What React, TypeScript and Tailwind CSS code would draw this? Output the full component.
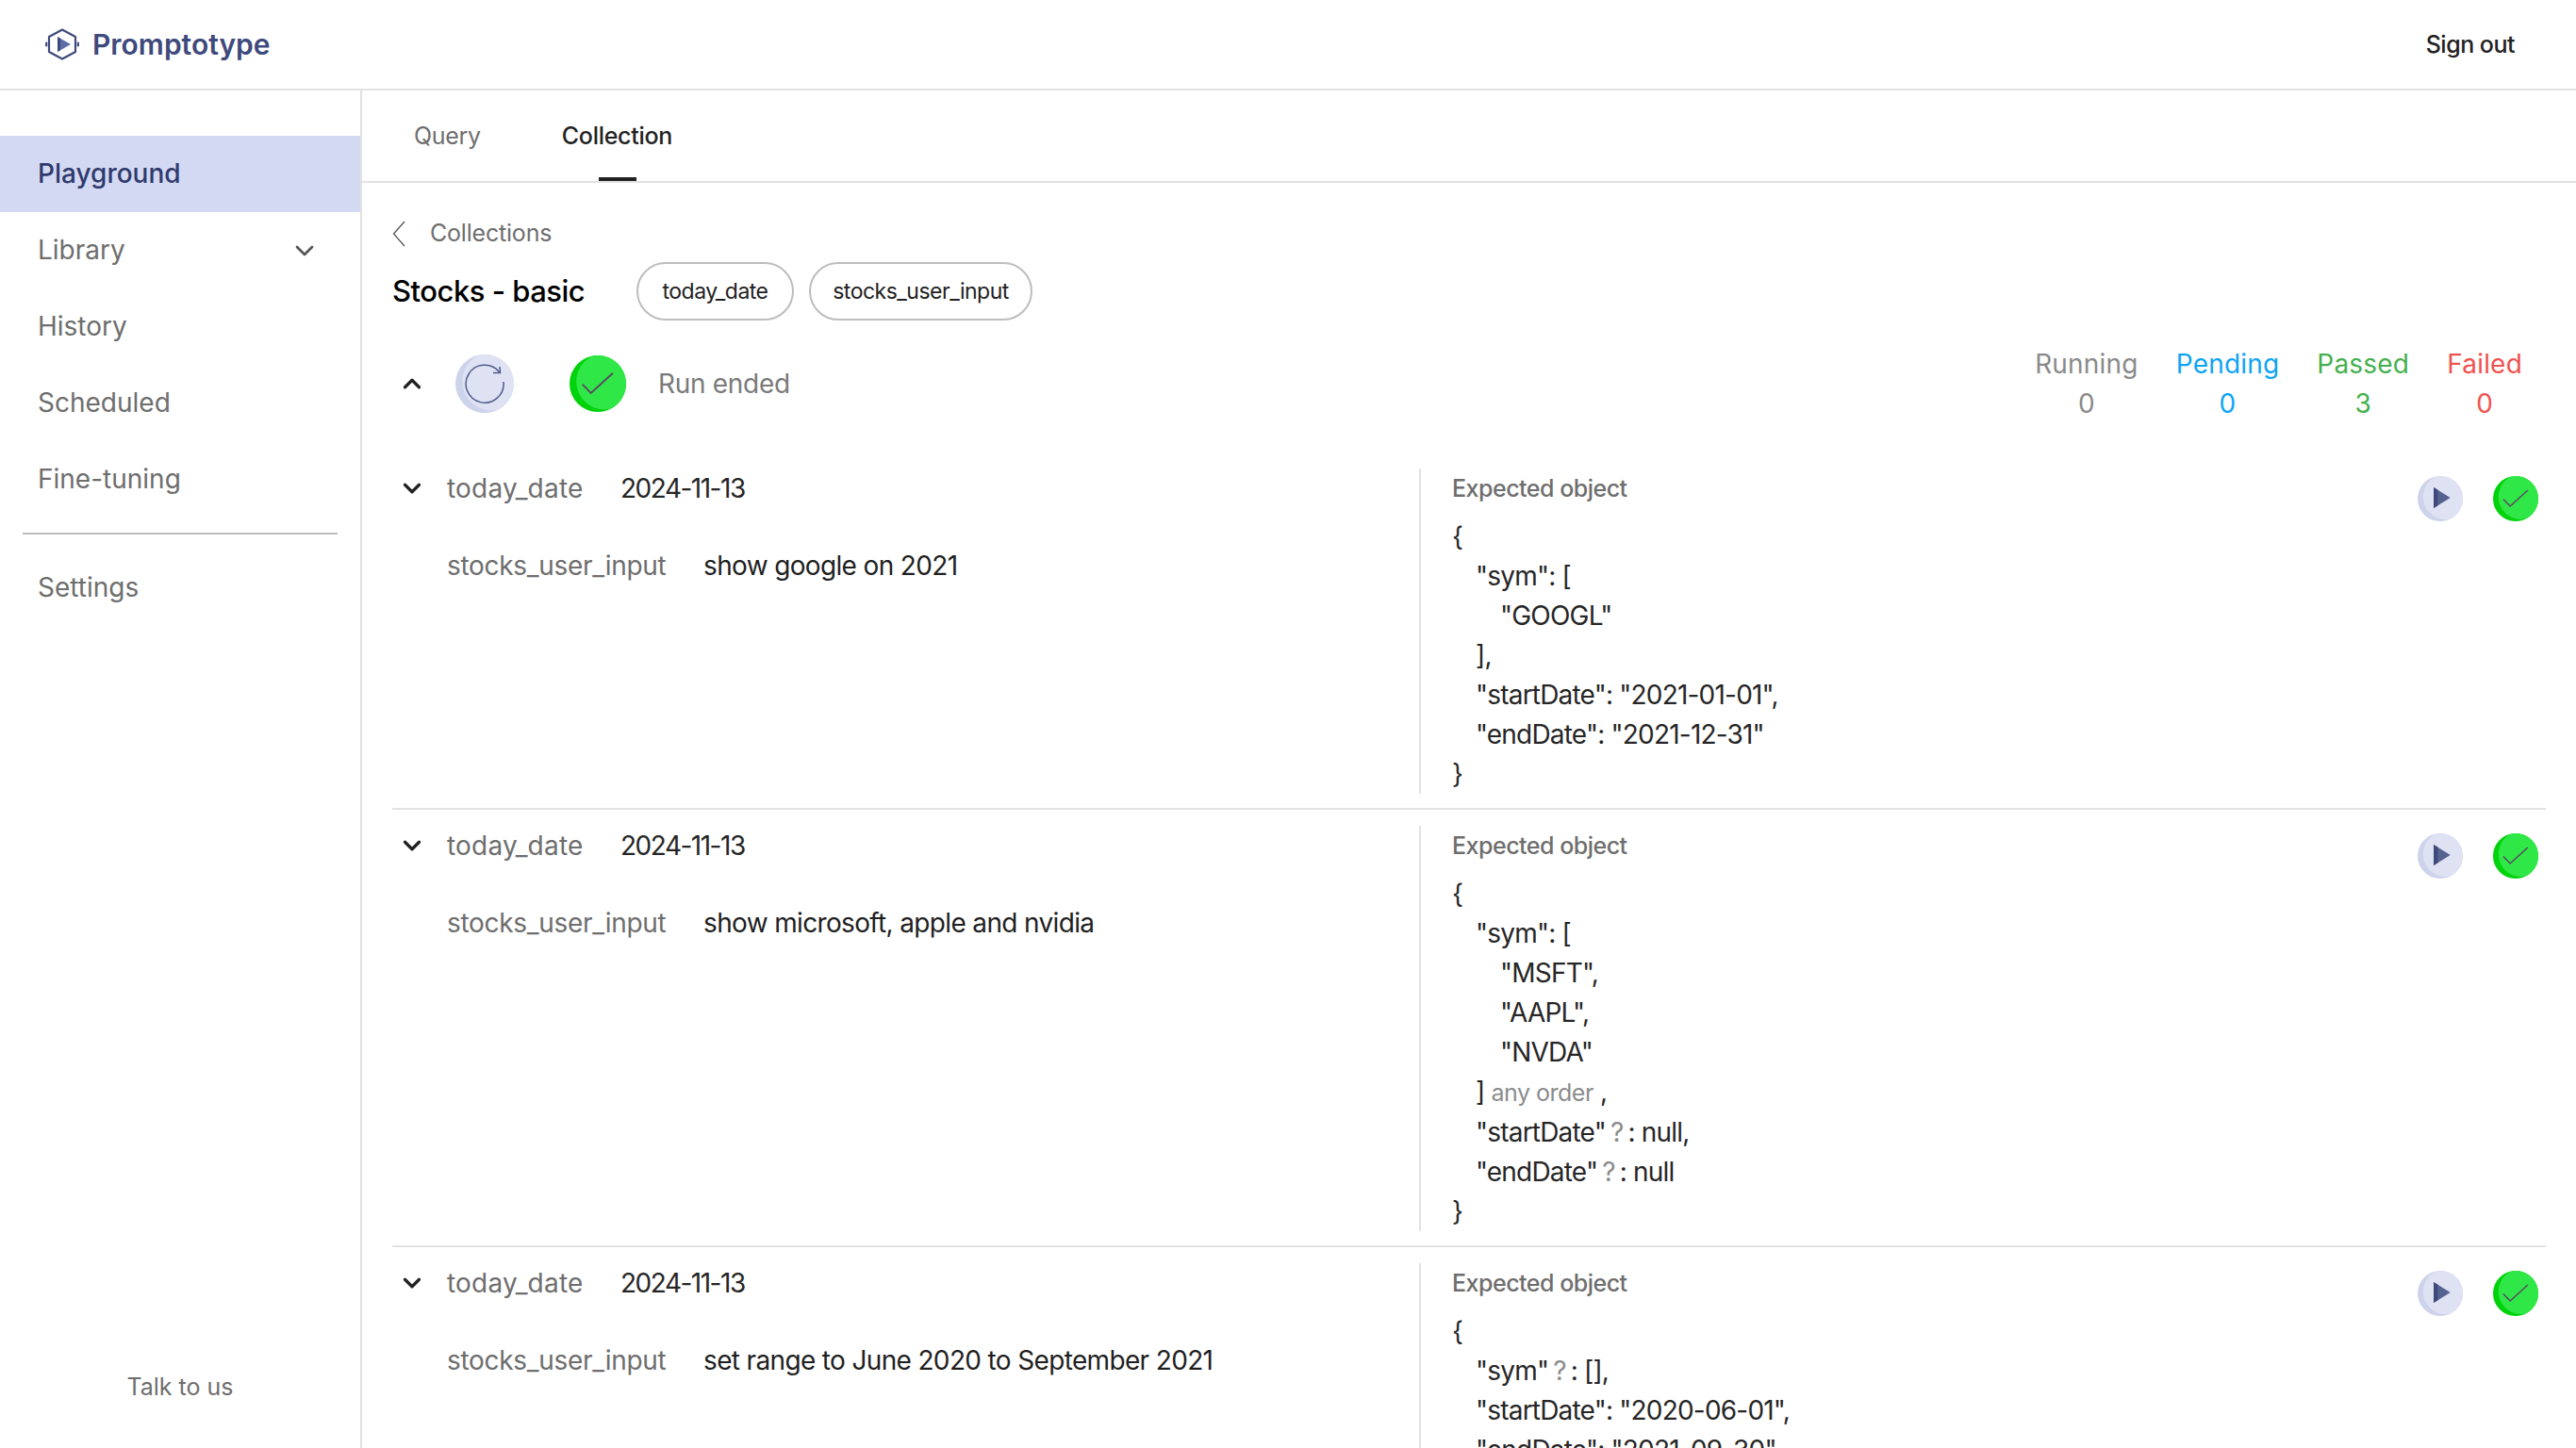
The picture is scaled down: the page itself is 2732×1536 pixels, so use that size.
import React from 'react';
import { ChevronDown, ChevronUp } from 'lucide-react';

const FONT = "font-['Inter','Noto_Sans',sans-serif]";

const Q = () => <span className="text-[#8c8c8c] mx-[5px]">?</span>;

const Badge: React.FC<{ children: React.ReactNode; size: number; green?: boolean }> = ({ children, size, green }) => (
  <div
    className={`relative rounded-full overflow-hidden shrink-0 ${green ? 'bg-[#00d30b]' : 'bg-[#cdd3eb]'}`}
    style={{ width: size, height: size }}
  >
    <div className={`absolute inset-0 rounded-full translate-x-[12%] -translate-y-[4%] ${green ? 'bg-[#2fe847]' : 'bg-[#dfe2f3]'}`} />
    <div className="absolute inset-0 flex items-center justify-center">{children}</div>
  </div>
);

const Check = ({ size }: { size: number }) => (
  <svg width={size} height={size} viewBox="0 0 60 60" fill="none" stroke="#5a4a63" strokeWidth="1.9">
    <path d="M13.7 30.7 L22.7 40 L46 18.7" />
  </svg>
);

const Play = ({ size }: { size: number }) => (
  <svg width={size} height={size} viewBox="0 0 48 48">
    <path d="M17 12 L34.7 23 L17 34 Z" fill="#56628f" />
    <path d="M17 12 L21.5 14.8 V31.2 L17 34 Z" fill="#3f4a7c" />
  </svg>
);

const Refresh = () => (
  <svg width="44" height="44" viewBox="0 0 44 44" fill="none" stroke="#4f5b8c" strokeWidth="1.5">
    <path d="M38 10 A20 20 0 1 0 42 20" />
    <path d="M38 4 L38.5 10.5 L31 10.5" />
  </svg>
);

const Logo = () => (
  <svg width="36" height="36" viewBox="0 0 36 36" fill="none">
    <path d="M18 2.5 L32 10 V26 L18 33.5 L4 26 V10 Z" stroke="#3f4a7c" strokeWidth="2.2" strokeLinejoin="round" />
    <path d="M1.2 16.5v3M34.8 16.5v3" stroke="#3f4a7c" strokeWidth="2.2" strokeLinecap="round" />
    <path d="M13 10 L27 18 L13 26 Z" fill="#5f6da6" />
    <path d="M13 10 L16 11.7 V24.3 L13 26 Z" fill="#3f4a7c" />
  </svg>
);

const BackChevron = () => (
  <svg width="14" height="28" viewBox="0 0 14 28" fill="none" stroke="#555" strokeWidth="1.3">
    <path d="M13 1 L1.5 14 L13 27" />
  </svg>
);

type Line = { indent: number; node: React.ReactNode };

const row1: Line[] = [
  { indent: 0, node: '{' },
  { indent: 1, node: '"sym": [' },
  { indent: 2, node: '"GOOGL"' },
  { indent: 1, node: '],' },
  { indent: 1, node: '"startDate": "2021-01-01",' },
  { indent: 1, node: '"endDate": "2021-12-31"' },
  { indent: 0, node: '}' },
];

const row2: Line[] = [
  { indent: 0, node: '{' },
  { indent: 1, node: '"sym": [' },
  { indent: 2, node: '"MSFT",' },
  { indent: 2, node: '"AAPL",' },
  { indent: 2, node: '"NVDA"' },
  { indent: 1, node: <>] <span className="text-[#8c8c8c] text-[25px] tracking-[-0.5px]">any order</span> ,</> },
  { indent: 1, node: <>"startDate"<Q />: null,</> },
  { indent: 1, node: <>"endDate"<Q />: null</> },
  { indent: 0, node: '}' },
];

const row3: Line[] = [
  { indent: 0, node: '{' },
  { indent: 1, node: <>"sym"<Q />: [],</> },
  { indent: 1, node: '"startDate": "2020-06-01",' },
  { indent: 1, node: '"endDate": "2021-09-30"' },
  { indent: 0, node: '}' },
];

const ResultRow: React.FC<{ input: string; lines: Line[]; last?: boolean }> = ({ input, lines, last }) => (
  <div className={`flex pt-[17px] ${last ? '' : 'pb-[15px] border-b-2 border-[#e2e2e2]'}`}>
    <div className="w-[1089px] shrink-0 flex">
      <ChevronDown className="w-[30px] h-[30px] text-[#222] ml-[6px] mt-[6px] shrink-0" strokeWidth={2.6} />
      <div className="ml-[22px] text-[28px]">
        <div className="flex h-[42px] items-center">
          <span className="text-[#6e6e6e] w-[184px] tracking-[0.2px]">today_date</span>
          <span className="text-[#262626] tracking-[-1.5px]">2024-11-13</span>
        </div>
        <div className="flex h-[42px] items-center mt-[40px]">
          <span className="text-[#6e6e6e] w-[272px] tracking-[-0.3px]">stocks_user_input</span>
          <span className="text-[#1f1f1f] tracking-[-0.65px]">{input}</span>
        </div>
      </div>
    </div>
    <div className="flex-1 flex justify-between border-l-2 border-[#e2e2e2] pl-[33px] pr-[8px]">
      <div className="pt-[1px]">
        <div className="h-[42px] flex items-center text-[25px] font-medium text-[#6e6e6e] tracking-[-0.5px]">Expected object</div>
        <div className="mt-[8px] text-[28px] leading-[42px] text-[#262626] tracking-[-0.8px] whitespace-pre">
          {lines.map((l, i) => (
            <div key={i} className={l.indent === 2 ? 'pl-[51px]' : l.indent === 1 ? 'pl-[25px]' : ''}>{l.node}</div>
          ))}
        </div>
      </div>
      <div className="flex items-start gap-[32px] pt-[8px]">
        <Badge size={48}><Play size={48} /></Badge>
        <Badge size={48} green><Check size={48} /></Badge>
      </div>
    </div>
  </div>
);

const Stat: React.FC<{ label: string; value: number; color: string }> = ({ label, value, color }) => (
  <div className={`flex flex-col items-center ${color}`}>
    <span className="h-[42px] leading-[42px]">{label}</span>
    <span className="h-[42px] leading-[42px]">{value}</span>
  </div>
);

export default function App() {
  return (
    <div className={`${FONT} h-[1536px] w-[2732px] overflow-hidden flex flex-col bg-white`}>
      <header className="h-[96px] shrink-0 flex items-center justify-between border-b-2 border-[#e2e2e2] pl-[48px] pr-[65px]">
        <div className="flex items-center gap-[14px]">
          <Logo />
          <span className="text-[30px] font-semibold text-[#3f4a7c]">Promptotype</span>
        </div>
        <span className="text-[25px] font-medium text-[#222] tracking-[-0.5px] pt-[2px]">Sign out</span>
      </header>
      <div className="flex-1 flex min-h-0">
        <aside className="w-[384px] shrink-0 border-r-2 border-[#e2e2e2] flex flex-col pt-[48px] pb-[46px] text-[28px] text-[#6e6e6e]">
          <div className="h-[81px] flex items-center pl-[40px] pb-[2px] bg-[#d3d9f2] text-[#2f3a6e] font-medium">Playground</div>
          <div className="h-[81px] flex items-center justify-between pl-[40px] pr-[43px] pb-[2px]">
            Library
            <ChevronDown className="w-[32px] h-[32px] mt-[2px] text-[#555]" strokeWidth={2} />
          </div>
          <div className="h-[81px] flex items-center pl-[40px] pb-[2px]">History</div>
          <div className="h-[81px] flex items-center pl-[40px] pb-[2px]">Scheduled</div>
          <div className="h-[81px] flex items-center pl-[40px] pb-[2px]">Fine-tuning</div>
          <div className="h-[2px] bg-[#bdbdbd] mx-[24px] mt-[16px]" />
          <div className="h-[81px] flex items-center pl-[40px] mt-[16px] pb-[2px]">Settings</div>
          <div className="mt-auto text-center text-[25px]">Talk to us</div>
        </aside>
        <main className="flex-1 min-w-0 flex flex-col">
          <div className="h-[98px] shrink-0 flex items-start border-b-2 border-[#e2e2e2] pl-[55px] pt-[28px] gap-[86px] text-[25px] tracking-[-0.3px]">
            <span className="text-[#6e6e6e] leading-[40px]">Query</span>
            <span className="relative text-[#222] font-medium leading-[40px]">
              Collection
              <span className="absolute top-[64px] left-[39px] w-[40px] h-[4px] bg-[#222]" />
            </span>
          </div>
          <div className="pl-[32px] pr-[32px]">
            <div className="flex items-center h-[40px] mt-[34px] text-[25px] text-[#6e6e6e] tracking-[-0.2px]">
              <BackChevron />
              <span className="ml-[26px]">Collections</span>
            </div>
            <div className="flex items-center mt-[10px] h-[62px]">
              <h1 className="text-[31px] font-medium text-black w-[259px] tracking-[-0.5px]">Stocks - basic</h1>
              <div className="flex gap-[16px] text-[23px] text-[#222] tracking-[-0.5px]">
                <span className="h-[62px] w-[167px] flex items-center justify-center rounded-full border-2 border-[#bdbdbd]">today_date</span>
                <span className="h-[62px] w-[237px] flex items-center justify-center rounded-full border-2 border-[#bdbdbd]">stocks_user_input</span>
              </div>
            </div>
            <div className="flex items-center justify-between mt-[25px] h-[84px]">
              <div className="flex items-center">
                <ChevronUp className="w-[30px] h-[30px] ml-[6px] text-[#222]" strokeWidth={2.6} />
                <div className="ml-[31px]"><Badge size={62}><Refresh /></Badge></div>
                <div className="ml-[59px]"><Badge size={60} green><Check size={60} /></Badge></div>
                <span className="ml-[34px] text-[28px] text-[#7a7a7a] tracking-[-0.3px]">Run ended</span>
              </div>
              <div className="flex gap-[40px] text-[28px] pr-[25px] tracking-[0.2px]">
                <Stat label="Running" value={0} color="text-[#8a8a8a]" />
                <Stat label="Pending" value={0} color="text-[#0ea5f5]" />
                <Stat label="Passed" value={3} color="text-[#45b04f]" />
                <Stat label="Failed" value={0} color="text-[#ef5350]" />
              </div>
            </div>
            <div className="mt-[31px]">
              <ResultRow input="show google on 2021" lines={row1} />
              <ResultRow input="show microsoft, apple and nvidia" lines={row2} />
              <ResultRow input="set range to June 2020 to September 2021" lines={row3} last />
            </div>
          </div>
        </main>
      </div>
    </div>
  );
}
